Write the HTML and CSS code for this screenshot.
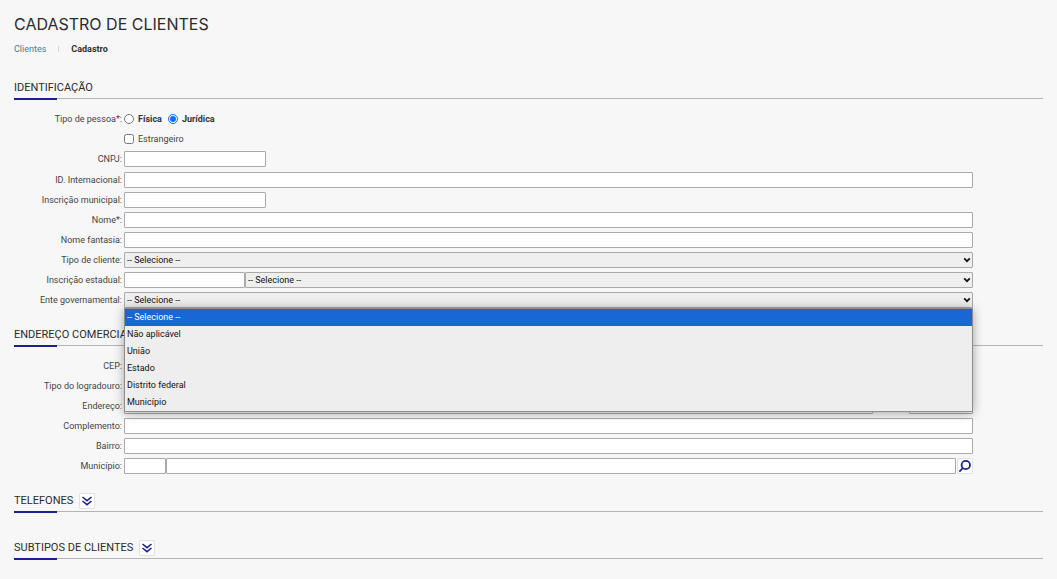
FILE: index.html
```html
<!DOCTYPE html>
<html lang="pt-BR">
<head>
<meta charset="utf-8">
<title>Cadastro de Clientes</title>
<link rel="stylesheet" href="styles.css">
</head>
<body>
<header class="page-head">
  <h1 class="page-title">CADASTRO DE CLIENTES</h1>
  <nav class="crumbs" aria-label="Trilha">
    <a class="crumb-link" href="#">Clientes</a>
    <span class="crumb-sep"></span>
    <span class="crumb-current">Cadastro</span>
  </nav>
</header>
<main>
  <form>
    <section class="section">
      <h2 class="section-title">IDENTIFICAÇÃO</h2>
      <div class="rows">
        <div class="row">
          <span class="label" id="lb-pessoa">Tipo de pessoa*:</span>
          <div class="field choices" role="radiogroup" aria-labelledby="lb-pessoa">
            <label class="choice strong"><input class="mark" type="radio" name="pessoa">Física</label>
            <label class="choice strong"><input class="mark" type="radio" name="pessoa" checked>Jurídica</label>
          </div>
        </div>
        <div class="row">
          <div class="field choices">
            <label class="choice"><input class="mark" type="checkbox">Estrangeiro</label>
          </div>
        </div>
        <div class="row row-document">
          <label class="label" for="cnpj">CNPJ:</label>
          <div class="field"><input class="box short" id="cnpj" type="text"></div>
        </div>
        <div class="row">
          <label class="label" for="idint">ID. Internacional:</label>
          <div class="field"><input class="box" id="idint" type="text"></div>
        </div>
        <div class="row">
          <label class="label" for="inscm">Inscrição municipal:</label>
          <div class="field"><input class="box short" id="inscm" type="text"></div>
        </div>
        <div class="row">
          <label class="label" for="nome">Nome*:</label>
          <div class="field"><input class="box" id="nome" type="text"></div>
        </div>
        <div class="row">
          <label class="label" for="fantasia">Nome fantasia:</label>
          <div class="field"><input class="box" id="fantasia" type="text"></div>
        </div>
        <div class="row">
          <label class="label" for="tipo">Tipo de cliente:</label>
          <div class="field"><select class="box select" id="tipo"><option>-- Selecione --</option></select></div>
        </div>
        <div class="row">
          <label class="label" for="insce">Inscrição estadual:</label>
          <div class="field"><input class="box medium" id="insce" type="text"><select class="box select" aria-label="Situação da inscrição estadual"><option>-- Selecione --</option></select></div>
        </div>
        <div class="row">
          <label class="label" for="ente">Ente governamental:</label>
          <div class="field">
            <select class="box select" id="ente"><option>-- Selecione --</option></select>
            <ul class="menu" role="listbox" aria-label="Ente governamental">
              <li class="option selected" role="option" aria-selected="true">-- Selecione --</li>
              <li class="option" role="option">Não aplicável</li>
              <li class="option" role="option">União</li>
              <li class="option" role="option">Estado</li>
              <li class="option" role="option">Distrito federal</li>
              <li class="option" role="option">Município</li>
            </ul>
          </div>
        </div>
      </div>
    </section>

    <section class="section">
      <h2 class="section-title">ENDEREÇO COMERCIAL</h2>
      <div class="rows">
        <div class="row">
          <label class="label" for="cep">CEP:</label>
          <div class="field"><input class="box short" id="cep" type="text"></div>
        </div>
        <div class="row">
          <label class="label" for="logr">Tipo do logradouro:</label>
          <div class="field"><select class="box select" id="logr"><option></option></select></div>
        </div>
        <div class="row">
          <label class="label" for="end">Endereço:</label>
          <div class="field"><input class="box" id="end" type="text"><span class="spacer"></span><input class="box number" type="text" aria-label="Número"></div>
        </div>
        <div class="row">
          <label class="label" for="compl">Complemento:</label>
          <div class="field"><input class="box" id="compl" type="text"></div>
        </div>
        <div class="row">
          <label class="label" for="bairro">Bairro:</label>
          <div class="field"><input class="box" id="bairro" type="text"></div>
        </div>
        <div class="row">
          <label class="label" for="mun">Município:</label>
          <div class="field"><input class="box code" id="mun" type="text"><input class="box" type="text" aria-label="Nome do município"><button class="icon-button search" type="button" aria-label="Pesquisar município"><svg class="icon-search" viewBox="0 0 14 14"><circle cx="7.8" cy="6" r="4.2"/><path d="M4.8 9 1.4 12.6"/></svg></button></div>
        </div>
      </div>
    </section>

    <section class="section">
      <h2 class="section-title">TELEFONES
        <button class="icon-button" type="button" aria-label="Expandir telefones"><svg class="icon-expand" viewBox="0 0 10 10"><path d="M.5 1 5 4.7 9.5 1M.5 5 5 8.7 9.5 5"/></svg></button></h2>
    </section>

    <section class="section section-last">
      <h2 class="section-title">SUBTIPOS DE CLIENTES
        <button class="icon-button" type="button" aria-label="Expandir subtipos de clientes"><svg class="icon-expand" viewBox="0 0 10 10"><path d="M.5 1 5 4.7 9.5 1M.5 5 5 8.7 9.5 5"/></svg></button></h2>
    </section>
  </form>
</main>
</body>
</html>
```
FILE: styles.css
```css
* {
  box-sizing: border-box;
}

body {
  margin: 0;
  padding: 14px;
  background: #f7f7f7;
  color: #444;
  font-family: Roboto, "Liberation Sans", sans-serif;
  font-size: 9px;
  line-height: 12px;
}

.page-title {
  margin: 0;
  color: #2b2b2b;
  font-family: Inter, "Liberation Sans", sans-serif;
  font-size: 16px;
  font-weight: 400;
  line-height: 20px;
}

.crumbs {
  display: flex;
  align-items: center;
  gap: 12px;
  margin-top: 9px;
}

.crumb-link {
  color: #4f7a8e;
  text-decoration: none;
}

.crumb-sep {
  width: 1px;
  height: 6px;
  background: #d4d4d4;
}

.crumb-current {
  color: #333;
  font-weight: 700;
}

.page-head {
  padding-bottom: 20px;
}

.section {
  padding-bottom: 14px;
}

.section-title {
  position: relative;
  display: flex;
  align-items: center;
  gap: 6px;
  height: 24px;
  margin: 0;
  padding-top: 2px;
  border-bottom: 1px solid #b4b4b4;
  color: #2b2b2b;
  font-size: 11px;
  font-weight: 400;
  line-height: 16px;
}

.section-title::after {
  content: "";
  position: absolute;
  left: 0;
  bottom: -2px;
  width: 43px;
  height: 2px;
  background: #1c2188;
}

.rows {
  display: flex;
  flex-direction: column;
  gap: 4px;
  padding: 12px 70px 0 0;
}

.row {
  display: grid;
  grid-template-columns: 108px 1fr;
  column-gap: 2px;
  align-items: center;
  height: 16px;
}

.row-document {
  align-items: start;
  height: 17px;
  line-height: 16px;
}

.label {
  text-align: right;
}

.field {
  position: relative;
  display: flex;
  grid-column: 2;
  min-width: 0;
}

.choices {
  gap: 6px;
}

.choice {
  display: flex;
  align-items: center;
  gap: 4px;
}

.strong {
  color: #333;
  font-weight: 700;
}

.mark {
  width: 10px;
  height: 10px;
  margin: 0;
}

.box {
  flex: 1;
  min-width: 0;
  height: 16px;
  margin: 0;
  padding: 0 2px;
  border: 1px solid #aaa;
  border-radius: 1px;
  background: #fff;
  color: #111;
  font-family: inherit;
  font-size: 9px;
}

.select {
  appearance: none;
  background: #efefef url("data:image/svg+xml,%3Csvg xmlns='http://www.w3.org/2000/svg' width='8' height='6' viewBox='0 0 8 6'%3E%3Cpath d='M1.2 1.4 4 4.2 6.8 1.4' fill='none' stroke='%23111' stroke-width='1.7'/%3E%3C/svg%3E") no-repeat right 1px center;
}

.short {
  flex: 0 0 142px;
}

.medium {
  flex: 0 0 121px;
}

.code {
  flex: 0 0 42px;
}

.number {
  flex: 0 0 64px;
}

.spacer {
  width: 36px;
}

.menu {
  position: absolute;
  top: 100%;
  left: 0;
  right: 0;
  z-index: 1;
  margin: 0;
  padding: 0;
  border: 1px solid #8c8c8c;
  background: #eee;
  box-shadow: 0 1px 10px rgba(0, 0, 0, 0.35);
  color: #111;
  list-style: none;
}

.option {
  padding: 0 2px;
  line-height: 17px;
}

.selected {
  background: #1967d2;
  color: #fff;
}

.icon-button {
  display: grid;
  place-items: center;
  width: 16px;
  height: 16px;
  padding: 0;
  border: 1px solid #e2e2e2;
  border-radius: 1px;
  background: #fff;
}

.search {
  margin-left: 1px;
}

.icon-search,
.icon-expand {
  fill: none;
  stroke: #1c2188;
}

.icon-search {
  width: 14px;
  height: 14px;
  stroke-width: 1.8;
}

.icon-expand {
  width: 10px;
  height: 10px;
  stroke-width: 1.5;
}

.section-last {
  padding-top: 9px;
}
```
